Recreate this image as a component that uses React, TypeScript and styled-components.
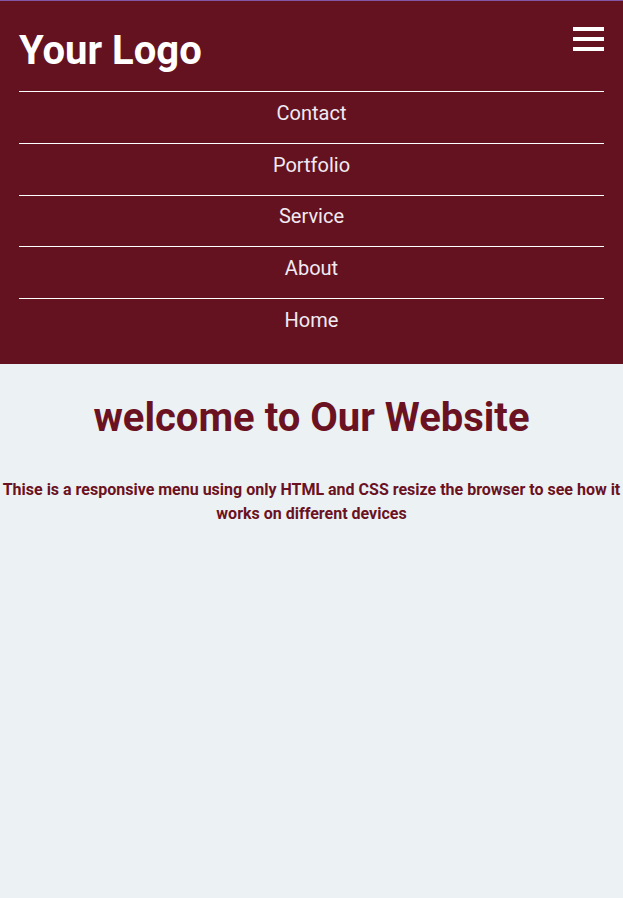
import React from "react";
import styled, { createGlobalStyle } from "styled-components";

const Global = createGlobalStyle`
  html, body { margin: 0; padding: 0; }
  body {
    background: #ecf1f4;
    font-family: Roboto, "Liberation Sans", sans-serif;
  }
  * { box-sizing: border-box; }
`;

const Header = styled.header`
  background: #641220;
  border-top: 1px solid #8456a6;
  padding: 0 19px 14px;
`;

const TopRow = styled.div`
  display: flex;
  align-items: flex-start;
  justify-content: space-between;
  height: 90px;
`;

const Logo = styled.div`
  color: #ffffff;
  font-size: 40px;
  line-height: 47px;
  font-weight: 700;
  margin-top: 26px;
`;

const Burger = styled.button`
  display: flex;
  flex-direction: column;
  gap: 6px;
  width: 31px;
  padding: 0;
  border: 0;
  background: transparent;
  margin-top: 26px;
`;

const Bar = styled.span`
  display: block;
  height: 4px;
  background: #ffffff;
`;

const Menu = styled.ul`
  list-style: none;
  margin: 0;
  padding: 0;
`;

const Item = styled.li`
  border-top: 1px solid #ffffff;
  height: 51.75px;
  display: flex;
  align-items: center;
  justify-content: center;
  padding-bottom: 9px;
  color: #f0eaf2;
  font-size: 20px;
`;

const Main = styled.main`
  text-align: center;
  color: #6b1222;
`;

const Title = styled.h1`
  margin: 30px 0 0;
  font-size: 40px;
  font-weight: 700;
`;

const Text = styled.p`
  margin: 37px 0 0;
  font-size: 16px;
  font-weight: 700;
  line-height: 24px;
`;

const items = ["Contact", "Portfolio", "Service", "About", "Home"];

export default function App() {
  return (
    <>
      <Global />
      <Header>
        <TopRow>
          <Logo>Your Logo</Logo>
          <Burger aria-label="menu">
            <Bar />
            <Bar />
            <Bar />
          </Burger>
        </TopRow>
        <Menu>
          {items.map((i) => (
            <Item key={i}>{i}</Item>
          ))}
        </Menu>
      </Header>
      <Main>
        <Title>welcome to Our Website</Title>
        <Text>
          Thise is a responsive menu using only HTML and CSS resize the browser to see how it works on different devices
        </Text>
      </Main>
    </>
  );
}
